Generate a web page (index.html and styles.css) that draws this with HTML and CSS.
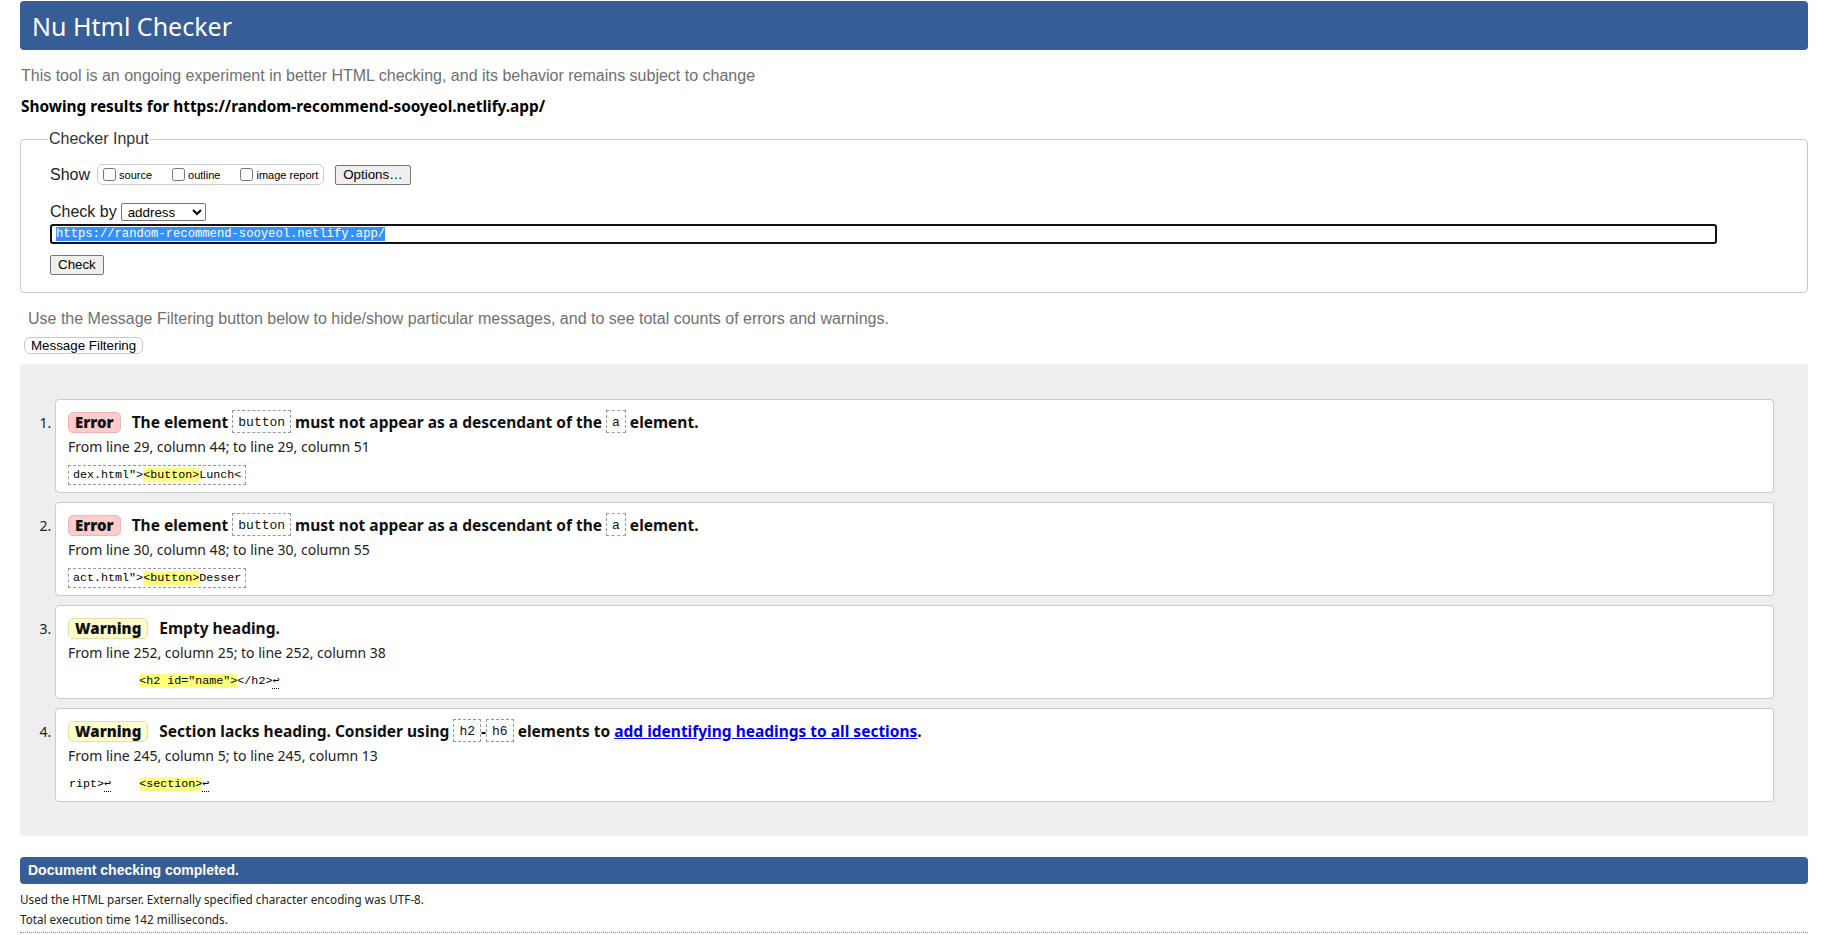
FILE: index.html
```html
<!DOCTYPE html>
<html lang="en">
<head>
    <meta charset="UTF-8">
    <meta name="viewport" content="width=device-width, initial-scale=1.0">
    <title>Showing results for https://random-recommend-sooyeol.netlify.app/ - Nu Html Checker</title>
    <link rel="stylesheet" href="styles.css">
</head>
<body>
<h1 class="title-bar">Nu Html Checker</h1>
<p class="intro">This tool is an ongoing experiment in better HTML checking, and its behavior remains subject to change</p>
<p class="results-for">Showing results for https://random-recommend-sooyeol.netlify.app/</p>

<form class="checker" onsubmit="return false">
    <fieldset class="checker-input">
        <legend>Checker Input</legend>
        <div class="row show-row">
            <span class="row-label">Show</span>
            <span class="show-options">
                <label><input type="checkbox">source</label>
                <label><input type="checkbox">outline</label>
                <label><input type="checkbox">image report</label>
            </span>
            <button type="button" class="btn options-btn">Options…</button>
        </div>
        <div class="row by-row">
            <span class="row-label">Check by</span>
            <select class="doc-select">
                <option>address</option>
                <option>file upload</option>
                <option>text input</option>
            </select>
        </div>
        <div class="url-field"><span class="url-selected">https://random-recommend-sooyeol.netlify.app/</span></div>
        <div class="row submit-row">
            <button type="submit" class="btn">Check</button>
        </div>
    </fieldset>
</form>

<p class="filter-hint">Use the Message Filtering button below to hide/show particular messages, and to see total counts of errors and warnings.</p>
<button type="button" class="filter-btn">Message Filtering</button>

<div class="results">
    <ol class="messages">
        <li class="msg">
            <p class="msg-title"><strong class="badge error">Error</strong> The element <code>button</code> must not appear as a descendant of the <code>a</code> element.</p>
            <p class="location">From line 29, column 44; to line 29, column 51</p>
            <p class="extract"><code>dex.html"&gt;<mark>&lt;button&gt;</mark>Lunch&lt;</code></p>
        </li>
        <li class="msg">
            <p class="msg-title"><strong class="badge error">Error</strong> The element <code>button</code> must not appear as a descendant of the <code>a</code> element.</p>
            <p class="location">From line 30, column 48; to line 30, column 55</p>
            <p class="extract"><code>act.html"&gt;<mark>&lt;button&gt;</mark>Desser</code></p>
        </li>
        <li class="msg">
            <p class="msg-title"><strong class="badge warning">Warning</strong> Empty heading.</p>
            <p class="location">From line 252, column 25; to line 252, column 38</p>
            <p class="extract plain"><code>          <mark>&lt;h2 id="name"&gt;</mark>&lt;/h2&gt;<span class="lf" title="Line break">↩</span></code></p>
        </li>
        <li class="msg">
            <p class="msg-title"><strong class="badge warning">Warning</strong> Section lacks heading. Consider using <code>h2</code>-<code>h6</code> elements to <a href="#">add identifying headings to all sections</a>.</p>
            <p class="location">From line 245, column 5; to line 245, column 13</p>
            <p class="extract plain"><code>ript&gt;<span class="lf" title="Line break">↩</span>    <mark>&lt;section&gt;</mark><span class="lf" title="Line break">↩</span></code></p>
        </li>
    </ol>
</div>

<p class="status-bar">Document checking completed.</p>
<div class="details">
    <p>Used the HTML parser. Externally specified character encoding was UTF-8.</p>
    <p>Total execution time 142 milliseconds.</p>
</div>
</body>
</html>
```

FILE: styles.css
```css
body {
    margin: 0;
    padding: 1px 21px 0 20px;
    font-family: "Noto Sans", sans-serif;
    color: #000;
    background: #fff;
}
.title-bar {
    margin: 0;
    height: 47px;
    padding: 2px 12px 0;
    line-height: 47px;
    font-size: 25px;
    font-weight: normal;
    color: #fff;
    background: #365d95;
    border-radius: 4px;
}
.intro {
    margin: 17px 1px 0;
    font: 16px/18px "Liberation Sans", Arial, sans-serif;
    color: #707070;
}
.results-for {
    margin: 12px 1px 0;
    font-size: 15.4px;
    font-weight: bold;
    line-height: 20px;
}

/* checker input form */
.checker-input {
    margin: 13px 0 0;
    padding: 0 28px 17px 29px;
    min-width: 0;
    border: 1px solid #c8c8c8;
    border-radius: 4px;
}
.checker-input legend {
    margin-left: -2px;
    padding: 0 1px;
    font: 16px/18px "Liberation Sans", Arial, sans-serif;
    color: #333;
}
.row {
    display: flex;
    align-items: center;
}
.row-label {
    font: 16px/18px "Liberation Sans", Arial, sans-serif;
    color: #222;
}
.show-row {
    margin-top: 16px;
    height: 21px;
}
.show-options {
    display: inline-flex;
    align-items: center;
    height: 19px;
    margin-left: 7px;
    padding: 0 5px 0 1px;
    border: 1px solid #ccc;
    border-radius: 6px;
    font: 11px "Liberation Sans", Arial, sans-serif;
}
.show-options label {
    display: inline-flex;
    align-items: center;
    margin-right: 16px;
}
.show-options label:last-child {
    margin-right: 0;
}
.show-options input {
    width: 13px;
    height: 13px;
    margin: 0 3px 0 4px;
}
.btn {
    padding: 1px 7px;
    font: 13.33px/16px "Liberation Sans", Arial, sans-serif;
    color: #000;
    background: #efefef;
    border: 1px solid #767676;
    border-radius: 2px;
}
.options-btn {
    margin-left: 11px;
}
.by-row {
    margin-top: 18px;
    height: 18px;
}
.doc-select {
    width: 85px;
    height: 18px;
    margin-left: 4px;
    padding: 0 0 0 2px;
    font: 13.33px "Liberation Sans", Arial, sans-serif;
    color: #000;
    background: #fff;
    border: 1px solid #767676;
    border-radius: 2px;
}
.url-field {
    height: 16px;
    margin: 3px 62px 0 0;
    padding: 0 4px;
    border: 2px solid #111;
    border-radius: 3px;
    font: 12.2px/16px "Liberation Mono", monospace;
    white-space: nowrap;
    overflow: hidden;
}
.url-selected {
    color: #fff;
    background: #3390ff;
}
.submit-row {
    margin-top: 11px;
}

.filter-hint {
    margin: 17px 0 0 8px;
    font: 16px/18px "Liberation Sans", Arial, sans-serif;
    color: #707070;
}
.filter-btn {
    display: block;
    margin: 9px 0 0 4px;
    padding: 0 6px;
    font: 13.33px/15px "Liberation Sans", Arial, sans-serif;
    color: #000;
    background: #fff;
    border: 1px solid #c8c8c8;
    border-radius: 6px;
}

/* message list */
.results {
    margin-top: 10px;
    padding: 35px 34px 34px 35px;
    background: #eee;
    border-radius: 4px;
}
.messages {
    margin: 0;
    padding: 0;
}
.msg {
    margin-bottom: 9px;
    padding: 11px 12px 9px;
    font-size: 14px;
    color: #222;
    background: #fff;
    border: 1px solid #ccc;
    border-radius: 4px;
}
.msg:last-child {
    margin-bottom: 0;
}
.msg-title {
    margin: 0;
    font-size: 15.5px;
    font-weight: bold;
    line-height: 22px;
    color: #111;
}
.msg-title code {
    padding: 4px 5px 2px;
    font: 13px/14px "Liberation Mono", monospace;
    vertical-align: 2px;
    border: 1px dashed #999;
}
.msg-title a {
    color: #00e;
}
.badge {
    display: inline-block;
    margin-right: 7px;
    padding: 0 6px;
    font-size: 15px;
    line-height: 19px;
    border: 1px solid;
    border-radius: 5px;
}
.badge.error {
    background: #fcc;
    border-color: #f0b4b4;
}
.badge.warning {
    background: #ffc;
    border-color: #e6e0a6;
}
.location {
    margin: 4px 0 0;
    line-height: 20px;
}
.extract {
    height: 20px;
    margin: 6px 0 0;
}
.extract code {
    display: inline-block;
    padding: 0 4px;
    font: 11.7px/18px "Liberation Mono", monospace;
    color: #000;
    white-space: pre;
    border: 1px dashed #999;
}
.extract.plain code {
    padding: 0;
    border-color: transparent;
}
.extract mark {
    color: inherit;
    background: #ffff80;
}
.lf {
    border-bottom: 1px dotted #000;
}

.status-bar {
    height: 27px;
    margin: 21px 0 0;
    padding: 0 8px;
    font: bold 14px/27px "Liberation Sans", Arial, sans-serif;
    color: #fff;
    background: #365d95;
    border-radius: 4px;
}
.details {
    margin-top: 5px;
    padding-bottom: 3px;
    border-bottom: 1px dotted #888;
}
.details p {
    margin: 0;
    font-size: 11.7px;
    line-height: 20px;
    color: #222;
}
```
